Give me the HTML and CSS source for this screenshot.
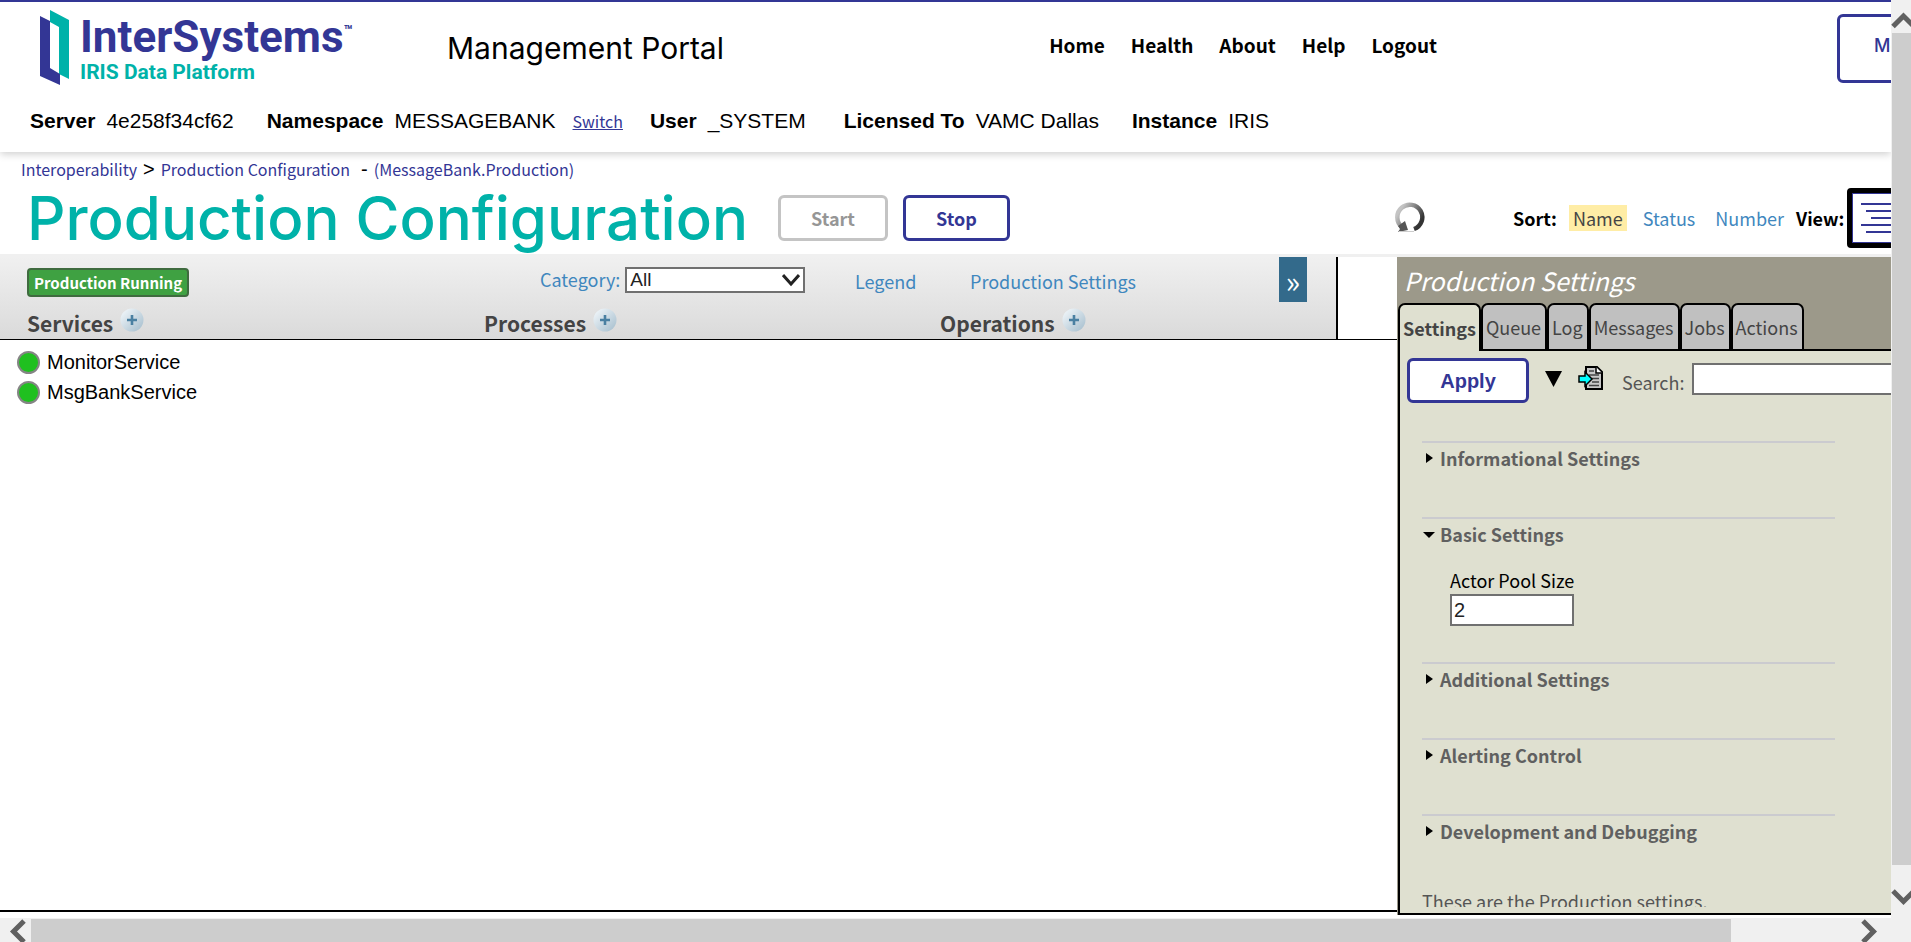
FILE: index.html
```
<!DOCTYPE html>
<html lang="en">
<head>
<meta charset="utf-8">
<title>Production Configuration</title>
<link rel="stylesheet" href="styles.css">
</head>
<body>
<div class="page">
  <header class="banner">
    <div class="banner-top">
      <div class="logo">
        <svg class="logo-mark" width="30" height="76" viewBox="0 0 30 76" aria-hidden="true">
          <path fill="#00b2a9" d="M10 0 29 10V69L19 64V17L10 12Z"/>
          <path fill="#333695" d="M0 6 10 11V58L20 64V75L0 66Z"/>
        </svg>
        <div class="logo-words">
          <span class="logo-name">InterSystems<sup class="logo-tm">™</sup></span>
          <span class="logo-product">IRIS Data Platform</span>
        </div>
      </div>
      <div class="portal-name">Management Portal</div>
      <nav class="main-nav">
        <a href="#">Home</a><a href="#">Health</a><a href="#">About</a><a href="#">Help</a><a href="#">Logout</a>
      </nav>
      <div class="menu-slot"><button class="menu-button" type="button">Menu</button></div>
    </div>
    <dl class="server-info">
      <div class="info-item"><dt>Server</dt><dd>4e258f34cf62</dd></div>
      <div class="info-item"><dt>Namespace</dt><dd>MESSAGEBANK</dd><dd class="switch"><a href="#">Switch</a></dd></div>
      <div class="info-item user-item"><dt>User</dt><dd>_SYSTEM</dd></div>
      <div class="info-item"><dt>Licensed To</dt><dd>VAMC Dallas</dd></div>
      <div class="info-item"><dt>Instance</dt><dd>IRIS</dd></div>
    </dl>
  </header>

  <div class="crumbs">
    <a href="#">Interoperability</a><span class="crumb-mark">&gt;</span><a href="#">Production Configuration</a><span class="crumb-mark crumb-dash">-</span><a href="#">(MessageBank.Production)</a>
  </div>

  <div class="title-row">
    <h1>Production Configuration</h1>
    <button class="btn start" type="button" disabled>Start</button>
    <button class="btn stop" type="button">Stop</button>
    <div class="view-tools">
      <button class="icon-button refresh" type="button" aria-label="Refresh">
        <svg width="32" height="32" viewBox="0 0 32 32">
          <defs><linearGradient id="ring" x1="0" x2="1" y1="0.2" y2="0.8"><stop offset="0.1" stop-color="#c4c4c4"/><stop offset="0.9" stop-color="#333"/></linearGradient></defs>
          <path d="M21 27A12.500 12.500 0 1 0 9 25" fill="none" stroke="url(#ring)" stroke-width="4.500"/>
          <path d="M12 19 15 28 5 30 7 27 5 24Z" fill="#555"/>
          <path d="M6 29.500H21" stroke="#ccc"/>
        </svg>
      </button>
      <div class="sort">
        <span class="tool-label">Sort:</span>
        <a class="current" href="#">Name</a><a href="#">Status</a><a href="#">Number</a>
      </div>
      <div class="view">
        <span class="tool-label">View:</span>
        <button class="view-button" type="button" aria-label="List view">
          <svg width="60" height="50" viewBox="0 0 60 50"><rect x="0" y="0" width="60" height="50" fill="#fff" stroke="#333695" stroke-width="2"/><path d="M9 11H50M14 18H50M19 25H50M9 32H50M14 39H50" stroke="#333695" stroke-width="2"/></svg>
        </button>
      </div>
    </div>
  </div>

  <div class="work">
    <main class="diagram">
      <div class="ribbon">
        <div class="ribbon-main">
          <div class="ribbon-tools">
            <div class="status-cell"><span class="status">Production Running</span></div>
            <div class="category">
              <label for="category">Category:</label>
              <span class="select-wrap">
                <select id="category"><option>All</option></select>
                <svg class="select-arrow" width="18" height="14" viewBox="0 0 18 14" aria-hidden="true"><path d="M1 2 9 11 17 2" fill="none" stroke="#222" stroke-width="3"/></svg>
              </span>
            </div>
            <a class="legend" href="#">Legend</a>
            <a class="settings-link" href="#">Production Settings</a>
            <button class="expand" type="button">»</button>
          </div>
          <div class="ribbon-heads">
            <h2>Services <button class="icon-button" type="button" aria-label="Add service"><svg width="24" height="24" viewBox="0 0 24 24"><defs><linearGradient id="ball" x1="0" x2="1" y1="0" y2="1"><stop offset="0.1" stop-color="#eef4f8"/><stop offset="1" stop-color="#a3bccc"/></linearGradient></defs><circle cx="12" cy="12" r="11.500" fill="url(#ball)"/><path d="M7 12H17M12 7V17" stroke="#4a80a2" stroke-width="2.600"/></svg></button></h2>
            <h2>Processes <button class="icon-button" type="button" aria-label="Add process"><svg width="24" height="24" viewBox="0 0 24 24"><circle cx="12" cy="12" r="11.500" fill="url(#ball)"/><path d="M7 12H17M12 7V17" stroke="#4a80a2" stroke-width="2.600"/></svg></button></h2>
            <h2>Operations <button class="icon-button" type="button" aria-label="Add operation"><svg width="24" height="24" viewBox="0 0 24 24"><circle cx="12" cy="12" r="11.500" fill="url(#ball)"/><path d="M7 12H17M12 7V17" stroke="#4a80a2" stroke-width="2.600"/></svg></button></h2>
          </div>
        </div>
      </div>
      <ul class="services">
        <li><span class="dot"></span>MonitorService</li>
        <li><span class="dot"></span>MsgBankService</li>
      </ul>
    </main>

    <aside class="panel">
      <h2 class="panel-title">Production Settings</h2>
      <div class="tabs" role="tablist">
        <button class="tab active" role="tab" aria-selected="true" type="button">Settings</button>
        <button class="tab" role="tab" type="button">Queue</button>
        <button class="tab" role="tab" type="button">Log</button>
        <button class="tab" role="tab" type="button">Messages</button>
        <button class="tab" role="tab" type="button">Jobs</button>
        <button class="tab" role="tab" type="button">Actions</button>
      </div>
      <div class="panel-body">
        <div class="panel-tools">
          <button class="btn apply" type="button">Apply</button>
          <button class="icon-button drop" type="button" aria-label="More"><svg width="17" height="16" viewBox="0 0 17 16"><path d="M0 0H17L8.500 16Z"/></svg></button>
          <button class="icon-button import" type="button" aria-label="Restore defaults"><svg width="25" height="24" viewBox="0 0 25 24"><path d="M8 1H19L24 6V23H8Z" fill="#c8c8c8" stroke="#000" stroke-width="2"/><path d="M18 1V7H24" fill="#fff" stroke="#000" stroke-width="1.500"/><path d="M11 5H16M11 9H21M14 12.500H21M14 16H21M11 19.500H21" stroke="#444" stroke-width="1.500"/><path d="M1 10H7V6L14 13 7 20V16H1Z" fill="#0ff" stroke="#000" stroke-width="1.500"/></svg></button>
          <label class="search-label" for="search">Search:</label>
          <input class="search" id="search" type="text">
        </div>
        <div class="sections">
          <section class="group"><h3><svg width="18" height="12" viewBox="0 0 18 12"><path d="M4 1 11 6 4 11Z"/></svg>Informational Settings</h3></section>
          <section class="group open"><h3><svg width="18" height="12" viewBox="0 0 18 12"><path d="M1 4H13L7 10Z"/></svg>Basic Settings</h3>
            <div class="field"><label for="pool">Actor Pool Size</label><input id="pool" type="text" value="2"></div>
          </section>
          <section class="group"><h3><svg width="18" height="12" viewBox="0 0 18 12"><path d="M4 1 11 6 4 11Z"/></svg>Additional Settings</h3></section>
          <section class="group"><h3><svg width="18" height="12" viewBox="0 0 18 12"><path d="M4 1 11 6 4 11Z"/></svg>Alerting Control</h3></section>
          <section class="group"><h3><svg width="18" height="12" viewBox="0 0 18 12"><path d="M4 1 11 6 4 11Z"/></svg>Development and Debugging</h3></section>
          <p class="note">These are the Production settings.</p>
        </div>
      </div>
    </aside>
  </div>
</div>

<div class="vbar">
  <svg width="20" height="33" viewBox="0 0 20 33"><path d="M2 26.500 12.500 16 23 26.500" fill="none" stroke="#606060" stroke-width="5"/></svg>
  <div class="vthumb"></div>
  <svg width="20" height="53" viewBox="0 0 20 53"><path d="M2 26 12.500 36.500 23 26" fill="none" stroke="#606060" stroke-width="5"/></svg>
</div>
<div class="hbar">
  <svg width="31" height="24" viewBox="0 0 31 24"><path d="M24 3 13.500 13.500 24 24" fill="none" stroke="#606060" stroke-width="5"/></svg>
  <div class="hthumb"></div>
  <svg class="hright" width="50" height="24" viewBox="0 0 50 24"><path d="M22 3 32.500 13.500 22 24" fill="none" stroke="#606060" stroke-width="5"/></svg>
</div>
</body>
</html>
```
FILE: styles.css
```
:root {
  --source: "Noto Sans CJK SC", "Noto Sans", sans-serif;
  --arial: "Liberation Sans", Arial, sans-serif;
  --wide: Inter, "Open Sans", sans-serif;
  --indigo: #333695;
  --teal: #00b2a9;
  --link: #3f87be;
}
* { box-sizing: border-box; }
body {
  margin: 0;
  height: 100vh;
  display: grid;
  grid-template-columns: minmax(0, 1fr) 20px;
  grid-template-rows: minmax(0, 1fr) 24px;
  overflow: hidden;
  background: #fff;
  color: #000;
  font-family: var(--source);
}
h1, h2, h3, p, dl, dd, ul { margin: 0; padding: 0; font-weight: normal; }
button, input, select { font: inherit; border-radius: 0; }
a { color: var(--indigo); text-decoration: none; }
.icon-button { border: 0; padding: 0; background: none; display: inline-flex; }

.page { overflow: hidden; display: flex; flex-direction: column; }

.banner {
  flex: none;
  border-top: 2px solid var(--indigo);
  box-shadow: 0 2px 8px rgba(0, 0, 0, 0.2);
  padding-bottom: 15px;
}
.banner-top { display: flex; align-items: flex-start; height: 103px; }
.logo { display: flex; gap: 10px; margin: 8px 0 0 40px; width: 312px; }
.logo-mark { flex: none; }
.logo-words { display: flex; flex-direction: column; font-family: Roboto, sans-serif; font-weight: 700; padding-top: 4px; white-space: nowrap; }
.logo-name { color: var(--indigo); font-size: 44px; line-height: 46px; }
.logo-tm { font-size: 15px; line-height: 16px; vertical-align: 16px; }
.logo-product { color: var(--teal); font-size: 21px; line-height: 24px; }
.portal-name { font-family: var(--wide); font-size: 30px; line-height: 36px; margin: 28px 0 0 95px; }
.main-nav { display: flex; gap: 26px; margin: 29px 400px 0 auto; font-size: 19px; line-height: 28px; font-weight: 700; }
.main-nav a { color: #000; }
.menu-slot { width: 54px; flex: none; margin-top: 12px; }
.menu-button {
  width: 150px; height: 69px; padding: 0 0 7px 34px; text-align: left;
  background: #fff; color: var(--indigo); border: 3px solid var(--indigo); border-radius: 6px;
  font-family: var(--wide); font-size: 18px; font-weight: 500;
}
.server-info { display: flex; gap: 33px; padding-left: 30px; font: 21px/32px var(--arial); }
.info-item { display: flex; gap: 11px; align-items: baseline; }
.info-item dt { font-weight: 700; }
.switch { font: 16px/28px var(--source); padding-left: 6px; }
.switch a { text-decoration: underline; }
.user-item { margin: 0 5px 0 -6px; }

.crumbs { flex: none; display: flex; align-items: baseline; padding: 3px 0 1px 21px; font-size: 16px; line-height: 28px; }
.crumb-mark { font: 20px/24px var(--arial); margin: 0 6px; }
.crumb-dash { margin-left: 11px; }

.title-row { flex: none; display: flex; align-items: center; height: 70px; padding-left: 27px; border-bottom: 3px solid #fff; }
h1 { font: 500 60px/64px var(--wide); color: var(--teal); white-space: nowrap; width: 751px; flex: none; }
.btn {
  font-size: 18px; font-weight: 700; line-height: 24px; flex: none;
  background: #fff; color: var(--indigo); border: 3px solid var(--indigo); border-radius: 6px;
}
.start { width: 110px; height: 46px; border-color: #c4c4c4; color: #969696; }
.stop { width: 107px; height: 46px; margin-left: 15px; }
.view-tools { margin-left: auto; display: flex; align-items: center; font-size: 18px; line-height: 26px; flex: none; }
.view-tools a { color: var(--link); padding: 0 4px; }
.view-tools a.current { background: #ffeda6; color: #444; }
.tool-label { font-weight: 700; }
.refresh { margin-right: 88px; }
.sort { display: flex; gap: 12px; margin-right: 8px; }
.view { display: flex; align-items: center; gap: 3px; width: 95px; }
.view-button { flex: none; width: 70px; padding: 0; border: 5px solid #000; border-radius: 4px; background: #fff; height: 60px; display: flex; }

.work { flex: 1; min-height: 0; display: flex; border-top: 3px solid #f0f0f0; }
.diagram { flex: 1; min-width: 0; border-bottom: 2px solid #000; margin-bottom: 6px; }
.ribbon { height: 83px; border-bottom: 1px solid #000; padding-right: 59px; }
.ribbon-main {
  height: 82px; border-right: 2px solid #000; padding-left: 27px;
  background: linear-gradient(#f0f0f0, #dadada);
}
.ribbon-tools { display: flex; height: 49px; align-items: flex-start; font-size: 18px; line-height: 28px; }
.ribbon-tools a, .category { color: var(--link); }
.status-cell { width: 513px; flex: none; padding-top: 11px; }
.status {
  display: block; width: max-content; border: 2px solid #3f6b3f; border-radius: 4px; background: #3fa142;
  color: #fff; font-size: 15px; line-height: 25px; font-weight: 700; padding: 0 5px;
}
.category { display: flex; gap: 5px; padding-top: 8px; width: 265px; }
.select-wrap { position: relative; margin-top: 2px; height: 26px; display: flex; }
.select-wrap select { appearance: none; width: 180px; height: 26px; border: 2px solid #707070; background: #fff; padding: 0 3px; font: 19px/22px var(--arial); color: #222; }
.select-arrow { position: absolute; right: 5px; top: 6px; pointer-events: none; }
.legend { margin: 10px 0 0 50px; width: 115px; }
.settings-link { margin-top: 10px; }
.expand { margin: 0 29px 0 auto; width: 28px; height: 45px; border: 0; padding: 0; background: #336a8b; color: #fff; font-size: 30px; line-height: 40px; }
.ribbon-heads { display: grid; grid-template-columns: 457px 456px 1fr; }
.ribbon-heads h2 { font-size: 21px; line-height: 34px; font-weight: 700; color: #444; display: flex; align-items: flex-start; gap: 7px; }
.ribbon-heads .icon-button { padding-top: 2px; }

.services { list-style: none; padding: 7px 0 0 17px; font: 20px/30px var(--arial); }
.services li { display: flex; align-items: center; gap: 7px; }
.dot { width: 23px; height: 23px; border: 2px solid #858585; border-radius: 50%; background: #20c020; }

.panel { width: 494px; flex: none; background: #9c998a; border-left: 1px solid #9c998a; display: flex; flex-direction: column; margin-bottom: 3px; overflow: hidden; }
.panel-title { flex: none; font-size: 25px; line-height: 46px; height: 46px; font-style: italic; color: #fff; padding-left: 6px; }
.tabs { flex: none; display: flex; height: 48px; box-shadow: inset 0 -2px #000; }
.tab {
  border: 2px solid #000; border-radius: 7px 7px 0 0; padding: 0 4px 0 3px; height: 48px;
  background: #c0c0c0; color: #444; font-size: 18px; line-height: 28px;
}
.tab.active { background: #dfe0d0; font-weight: 700; border-bottom: 0; padding-right: 3px; }
.panel-body { flex: 1; min-height: 0; background: #dfe0d0; border: solid #000; border-width: 0 0 2px 2px; position: relative; }
.panel-tools { display: flex; align-items: flex-start; height: 90px; padding: 7px 0 0 7px; }
.apply { width: 122px; height: 45px; font-family: var(--arial); font-size: 20px; }
.drop { margin: 13px 16px 0 16px; }
.import { margin: 8px 19px 0 0; }
.search-label { color: #555; font-size: 18px; line-height: 26px; margin: 11px 8px 0 0; }
.search { flex: none; width: 240px; height: 32px; border: 2px solid #707070; background: #fff; margin-top: 5px; }
.sections { padding: 0 56px 0 22px; position: absolute; top: 90px; bottom: 6px; left: 0; right: 0; overflow: hidden; }
.group { border-top: 2px solid #cbcbcf; height: 76px; padding-top: 1px; }
.group.open { height: 145px; }
.group h3 { display: flex; align-items: center; font-size: 18px; line-height: 28px; font-weight: 700; color: #606060; }
.group h3 svg { fill: #000; }
.field { padding: 18px 0 0 28px; display: flex; flex-direction: column; align-items: flex-start; font-size: 18px; line-height: 28px; }
.field input { width: 124px; height: 32px; border: 2px solid #707070; padding: 0 2px; font: 20px/26px var(--arial); color: #222; }
.note { font-size: 18px; line-height: 22px; color: #555; }

.vbar { background: #f0f0f0; display: flex; flex-direction: column; grid-row: 1 / 3; grid-column: 2; padding-bottom: 24px; }
.vbar svg { flex: none; }
.vthumb { flex: 1; margin-left: 1px; background: #cdcdcd; }
.hbar { background: #f0f0f0; display: flex; grid-row: 2; grid-column: 1; }
.hbar svg { flex: none; }
.hthumb { width: 1700px; max-width: 91%; margin-top: 1px; background: #cdcdcd; }
.hright { margin-left: auto; }
```
